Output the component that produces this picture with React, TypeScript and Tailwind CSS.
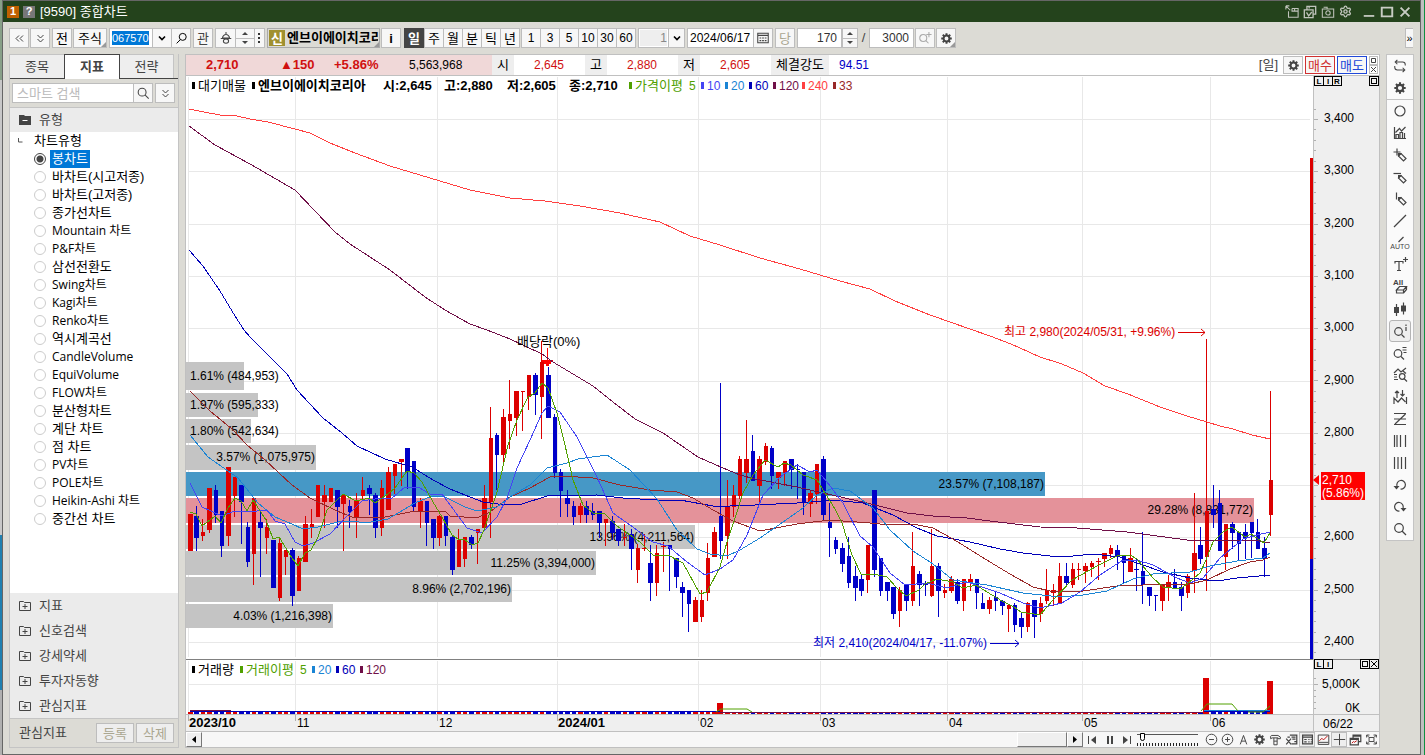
import { useState, type ReactNode } from 'react';
import clsx from 'clsx';
import { Settings } from 'lucide-react';

const RED = '#dc0000';
const BLUE = '#0000c8';

// [high, bodyTop, bodyBottom, low, up]
const CANDLES: [number, number, number, number, number][] = [
  [514, 514, 551, 551, 1], [506, 516, 538, 551, 0], [519, 532, 536, 541, 1], [488, 488, 530, 533, 1],
  [485, 490, 515, 523, 0], [511, 511, 546, 557, 0], [467, 467, 536, 546, 1], [477, 477, 496, 517, 1],
  [485, 485, 502, 544, 0], [522, 527, 562, 567, 0], [498, 498, 554, 585, 1], [512, 522, 528, 577, 0],
  [519, 527, 538, 554, 1], [540, 540, 588, 588, 0], [537, 543, 598, 601, 1], [550, 550, 557, 575, 1],
  [548, 550, 596, 606, 0], [556, 558, 591, 591, 1], [516, 524, 562, 562, 1], [509, 524, 528, 538, 1],
  [485, 485, 517, 517, 1], [485, 495, 502, 528, 1], [488, 488, 502, 502, 1], [490, 490, 507, 528, 0],
  [494, 495, 504, 551, 1], [500, 506, 512, 528, 0], [493, 501, 518, 538, 1], [477, 490, 496, 500, 1],
  [485, 488, 494, 515, 0], [493, 495, 528, 538, 0], [480, 488, 528, 536, 1], [467, 472, 510, 510, 1],
  [464, 464, 476, 494, 1], [459, 459, 462, 486, 1], [448, 448, 472, 489, 0], [461, 461, 507, 512, 0],
  [498, 501, 511, 528, 1], [501, 501, 523, 546, 0], [519, 519, 538, 549, 0], [515, 516, 538, 546, 1],
  [516, 516, 536, 546, 0], [536, 537, 570, 575, 0], [529, 540, 567, 567, 1], [537, 537, 559, 567, 1],
  [535, 537, 545, 549, 0], [529, 529, 533, 564, 1], [485, 498, 528, 528, 1], [407, 438, 502, 538, 1],
  [433, 435, 455, 490, 0], [409, 417, 455, 466, 1], [380, 414, 421, 449, 1], [391, 391, 418, 436, 1],
  [391, 391, 392, 431, 1], [375, 375, 397, 410, 1], [373, 375, 395, 415, 0], [341, 362, 397, 439, 1],
  [367, 375, 418, 418, 0], [414, 417, 473, 478, 0], [469, 472, 491, 517, 0], [490, 498, 504, 517, 0],
  [501, 506, 517, 525, 0], [503, 506, 515, 523, 1], [501, 506, 515, 523, 0], [503, 511, 515, 520, 0],
  [511, 511, 523, 538, 0], [519, 519, 523, 546, 1], [516, 521, 533, 540, 0], [529, 529, 541, 546, 0],
  [524, 537, 538, 546, 1], [529, 534, 549, 570, 0], [544, 548, 570, 583, 1], [534, 548, 549, 551, 1],
  [545, 563, 583, 601, 0], [545, 553, 583, 596, 1], [542, 546, 547, 572, 1], [545, 545, 549, 591, 0],
  [558, 558, 577, 588, 0], [582, 587, 593, 617, 0], [590, 590, 604, 632, 0], [597, 600, 622, 622, 1],
  [590, 600, 617, 622, 1], [543, 558, 593, 601, 1], [527, 532, 557, 557, 1], [383, 516, 541, 559, 0],
  [480, 507, 536, 559, 1], [485, 495, 507, 517, 1], [456, 459, 496, 499, 1], [420, 459, 473, 483, 1],
  [435, 451, 481, 481, 0], [456, 459, 486, 502, 1], [443, 446, 462, 465, 1], [446, 448, 476, 489, 0],
  [472, 472, 478, 489, 1], [461, 461, 473, 486, 1], [459, 459, 470, 489, 0], [464, 469, 470, 499, 0],
  [472, 472, 503, 515, 0], [490, 493, 504, 517, 1], [464, 464, 494, 504, 1], [456, 459, 515, 520, 0],
  [503, 522, 528, 557, 0], [537, 540, 549, 554, 0], [543, 548, 564, 572, 0], [537, 556, 583, 588, 0],
  [566, 576, 588, 601, 0], [574, 579, 591, 596, 0], [545, 545, 580, 593, 1], [490, 490, 570, 577, 0],
  [558, 558, 591, 596, 0], [582, 582, 591, 601, 0], [587, 587, 614, 619, 0], [587, 590, 611, 627, 1],
  [584, 584, 601, 611, 0], [532, 566, 601, 606, 1], [571, 574, 585, 606, 0], [581, 584, 585, 596, 0],
  [529, 566, 596, 597, 1], [563, 566, 591, 617, 0], [584, 590, 593, 598, 1], [576, 579, 591, 593, 1],
  [579, 582, 601, 604, 0], [579, 579, 601, 611, 1], [574, 579, 583, 591, 1], [579, 579, 593, 609, 0],
  [593, 603, 609, 609, 0], [597, 600, 609, 614, 1], [591, 597, 601, 611, 0], [600, 601, 606, 615, 0],
  [605, 605, 609, 632, 1], [603, 605, 625, 632, 0], [613, 618, 627, 638, 0], [602, 603, 627, 632, 1],
  [600, 600, 617, 638, 0], [597, 603, 614, 622, 1], [569, 590, 601, 604, 1], [584, 590, 593, 606, 1],
  [563, 576, 604, 604, 1], [563, 576, 583, 585, 0], [563, 569, 585, 588, 1], [563, 569, 570, 580, 1],
  [563, 566, 571, 583, 1], [561, 563, 567, 577, 1], [558, 561, 562, 580, 1], [553, 553, 559, 567, 1],
  [545, 548, 554, 558, 1], [545, 550, 557, 570, 0], [556, 556, 563, 584, 0], [548, 558, 572, 572, 1],
  [558, 569, 570, 591, 0], [532, 571, 585, 604, 0], [587, 587, 596, 606, 0], [595, 595, 596, 611, 0],
  [584, 585, 601, 611, 1], [575, 582, 587, 601, 1], [569, 582, 588, 588, 0], [582, 587, 596, 611, 0],
  [574, 576, 593, 598, 1], [493, 553, 571, 593, 1], [527, 545, 559, 564, 0], [339, 511, 557, 591, 1],
  [485, 509, 515, 528, 0], [490, 503, 551, 551, 0], [524, 524, 557, 570, 1], [522, 524, 533, 549, 0],
  [532, 532, 544, 561, 0], [524, 532, 538, 559, 0], [522, 522, 533, 558, 0], [519, 532, 549, 549, 0],
  [537, 548, 559, 577, 0], [391, 480, 515, 536, 1],
];

const AVERAGES = [
  {
    color: '#ff4040',
    points:
      '189,109 204,112 220,115 237,116 250,119 268,122 295,129 310,133 330,143 355,153 390,166 430,178 470,190 510,198 545,201 580,206 620,213 660,222 690,236 720,245 760,258 800,269 840,281 870,289 895,301 930,315 990,336 1011,344 1040,357 1062,364 1083,373 1105,386 1128,394 1160,407 1187,416 1207,422 1220,426 1233,429 1252,435 1270,439',
  },
  {
    color: '#701048',
    points:
      '189,126 215,145 250,164 295,190 335,232 350,244 390,270 425,297 445,310 470,324 487,330 510,339 542,354 553,362 593,386 613,402 635,419 663,433 698,457 723,468 740,475 755,479 797,487 823,493 867,503 907,513 933,516 967,518 990,521 1040,527 1077,528 1127,532 1150,535 1187,540 1207,540 1253,540 1270,543',
  },
  {
    color: '#0000b8',
    points:
      '189,250 203,266 220,291 235,316 244,330 250,337 268,355 287,374 297,390 323,418 342,433 357,446 385,459 412,467 433,480 450,489 465,495 483,502 505,505 522,504 547,496 597,495 623,498 657,500 680,500 713,506 730,506 755,505 797,503 833,500 863,503 893,515 917,528 937,536 970,542 1000,549 1023,553 1050,556 1073,556 1093,554 1120,557 1140,564 1163,572 1190,578 1207,580 1224,580 1237,578 1270,575',
  },
  {
    color: '#982828',
    points:
      '190,391 210,411 232,429 247,445 265,460 292,485 310,498 337,511 352,517 385,517 415,511 445,511 450,516 477,518 490,512 510,497 530,488 550,477 563,476 593,478 620,485 650,490 677,492 693,498 713,510 733,521 760,531 797,524 830,520 870,523 890,525 913,524 933,528 953,539 990,562 1010,574 1033,587 1050,591 1083,591 1117,586 1170,584 1190,584 1207,580 1230,569 1250,562 1263,560 1270,557',
  },
  {
    color: '#1a84d4',
    points:
      '190,435 208,457 238,478 258,503 275,517 292,524 303,529 318,527 338,522 352,521 365,523 388,519 415,503 432,496 445,497 465,507 477,511 497,507 513,495 530,485 547,468 567,463 578,459 607,455 630,470 657,499 677,530 697,549 710,554 727,556 740,550 760,538 783,522 803,508 817,495 833,488 850,491 873,508 890,530 913,551 933,564 953,580 987,585 1023,593 1060,597 1083,595 1107,591 1133,579 1153,574 1190,572 1210,566 1237,561 1263,558 1270,553',
  },
  {
    color: '#4444f4',
    points:
      '190,483 202,507 222,516 235,511 248,512 267,510 275,521 285,524 295,542 303,546 313,543 330,534 348,515 362,501 375,499 392,498 405,487 418,487 430,494 442,494 467,528 482,533 497,517 507,498 517,468 530,440 542,413 548,406 560,412 577,437 597,477 613,513 637,530 653,542 668,546 687,562 705,575 720,569 733,560 747,535 763,495 780,477 797,465 810,472 817,470 827,482 843,503 860,536 873,547 890,573 905,585 927,583 947,588 967,582 1000,593 1023,603 1040,608 1062,603 1080,592 1100,575 1123,560 1137,560 1153,565 1177,578 1190,583 1203,578 1220,558 1243,539 1257,535 1270,532',
  },
  {
    color: '#50a000',
    points:
      '190,512 196,514 202,526 215,516 221,523 228,508 235,498 241,501 247,511 253,500 266,520 273,539 279,537 292,558 298,566 305,553 311,550 318,537 327,510 343,494 356,501 369,498 375,503 388,494 395,488 407,471 414,473 422,482 433,502 442,517 452,535 458,539 464,539 472,545 478,543 484,530 497,492 508,445 517,420 528,397 535,393 542,383 548,388 557,413 565,445 573,480 583,505 593,513 605,514 617,526 640,542 653,555 668,555 683,563 700,594 707,592 720,567 727,542 737,512 743,493 753,475 765,460 778,467 784,463 791,465 803,475 817,480 825,493 835,509 842,523 852,555 861,574 874,574 887,577 897,588 906,596 919,590 925,584 937,579 953,582 963,588 976,585 987,592 1002,601 1014,607 1021,612 1040,615 1053,600 1072,580 1097,566 1117,556 1130,555 1137,559 1153,578 1163,587 1180,589 1187,584 1200,573 1206,560 1213,542 1223,532 1232,527 1245,537 1251,534 1264,543 1270,533',
  },
];

const PROFILE = [
  { y: 362, h: 28, end: 244, label: '1.61% (484,953)', color: '#c4c4c4' },
  { y: 393, h: 24, end: 258, label: '1.97% (595,333)', color: '#c4c4c4' },
  { y: 419, h: 24, end: 251, label: '1.80% (542,634)', color: '#c4c4c4' },
  { y: 445, h: 25, end: 316, label: '3.57% (1,075,975)', color: '#c4c4c4' },
  { y: 472, h: 24, end: 1045, label: '23.57% (7,108,187)', color: '#4698c6' },
  { y: 498, h: 25, end: 1254, label: '29.28% (8,831,772)', color: '#e4929a' },
  { y: 525, h: 24, end: 695, label: '13.96% (4,211,564)', color: '#c4c4c4' },
  { y: 551, h: 24, end: 596, label: '11.25% (3,394,000)', color: '#c4c4c4' },
  { y: 577, h: 25, end: 512, label: '8.96% (2,702,196)', color: '#c4c4c4' },
  { y: 604, h: 24, end: 333, label: '4.03% (1,216,398)', color: '#c4c4c4' },
];

const MONTHS = [
  { x: 188, label: '2023/10', bold: true },
  { x: 295, label: '11' },
  { x: 437, label: '12' },
  { x: 557, label: '2024/01', bold: true },
  { x: 698, label: '02' },
  { x: 820, label: '03' },
  { x: 947, label: '04' },
  { x: 1082, label: '05' },
  { x: 1210, label: '06' },
];

const PRICES = ['3,400', '3,300', '3,200', '3,100', '3,000', '2,900', '2,800', '2,700', '2,600', '2,500', '2,400'];
const priceY = (i: number) => Math.round(119 + i * 52.3);

const PRICE_LEGEND = [
  { x: 192, label: '대기매물', color: '#000', hangul: true },
  { x: 629, label: '가격이평', color: '#50a000', hangul: true },
  { x: 701, label: '10', color: '#4444f4' },
  { x: 725, label: '20', color: '#1a84d4' },
  { x: 749, label: '60', color: '#0000b8' },
  { x: 773, label: '120', color: '#701048' },
  { x: 802, label: '240', color: '#ff4040' },
  { x: 833, label: '33', color: '#982828' },
];

const VOLUME_LEGEND = [
  { x: 192, label: '거래량', color: '#000', hangul: true },
  { x: 240, label: '거래이평', color: '#50a000', hangul: true },
  { x: 312, label: '20', color: '#1a84d4' },
  { x: 336, label: '60', color: '#0000b8' },
  { x: 360, label: '120', color: '#701048' },
];

const CHART_TYPES = [
  '봉차트', '바차트(시고저종)', '바차트(고저종)', '종가선차트', 'Mountain 차트', 'P&F차트', '삼선전환도',
  'Swing차트', 'Kagi차트', 'Renko차트', '역시계곡선', 'CandleVolume', 'EquiVolume', 'FLOW차트', '분산형차트',
  '계단 차트', '점 차트', 'PV차트', 'POLE차트', 'Heikin-Ashi 차트', '중간선 차트',
];

function Icon({ children, size = 16, className }: { children: ReactNode; size?: number; className?: string }) {
  return (
    <svg
      width={size}
      height={size}
      viewBox="0 0 16 16"
      fill="none"
      stroke="currentColor"
      strokeWidth="1.2"
      className={clsx('shrink-0', className)}
      aria-hidden="true"
    >
      {children}
    </svg>
  );
}

const gearTeeth = 'M8 1.5v3M8 11.5v3M1.5 8h3M11.5 8h3M3.4 3.4l2 2M10.6 10.6l2 2M3.4 12.6l2-2M10.6 5.4l2-2';

function Gear({ size = 16, className }: { size?: number; className?: string }) {
  return (
    <Icon size={size} className={className}>
      <path d={gearTeeth} strokeWidth="2.4" />
      <circle cx="8" cy="8" r="3.6" strokeWidth="2.4" />
    </Icon>
  );
}

const pencil = (
  <>
    <path d="M6.5 9l2.5-2.500 5 5-2.500 2.500z" />
    <path d="M6 6h4L6 10z" fill="currentColor" stroke="none" />
  </>
);

const DRAW_TOOLS: { name: string; icon: ReactNode }[] = [
  { name: '원', icon: <circle cx="8" cy="8" r="5" /> },
  {
    name: '지표 추가',
    icon: <path d="M2.5 2v11.5H14M4 13V9.5h2.5V13M8 13V7.5h2.5V13M12.5 13V8M3.5 7.5l4-4 2 2.5 4-4" />,
  },
  { name: '십자선', icon: <><path d="M1.5 5h7M5 1.5v7" />{pencil}</> },
  { name: '수평선', icon: <><path d="M1.5 4.5H9" />{pencil}</> },
  { name: '수직선', icon: <><path d="M4.5 1.5v7" />{pencil}</> },
  { name: '추세선', icon: <path d="M2 14L14 2" /> },
  {
    name: '자동 추세선',
    icon: (
      <>
        <path d="M6.5 7L11.5 2" />
        <text x="8" y="14" fontSize="7" textAnchor="middle" fill="currentColor" stroke="none">AUTO</text>
      </>
    ),
  },
  {
    name: '텍스트',
    icon: <path d="M3 6.5v-2h8v2M7 4.500v9M5 13.5h4M13.5 0v5M11 2.500h5" />,
  },
  {
    name: '모두 지우기',
    icon: (
      <>
        <text x="1" y="6" fontSize="8" fontWeight="bold" fill="currentColor" stroke="none">All</text>
        <path d="M4.5 11l3-3.500h7l-3 3.500zM4.5 11v3H11.500V11M11.500 14l3-3.500v-3" />
      </>
    ),
  },
  {
    name: '봉',
    icon: (
      <>
        <path d="M4.5 3v12M11.5 1.500v12" />
        <path d="M2 6h5v6H2zM9 4.500h5v6H9z" fill="currentColor" stroke="none" />
      </>
    ),
  },
  { name: '정보 보기', icon: <><circle cx="6.5" cy="8.5" r="3.8" /><path d="M9.5 11.5l3 3M14 4v4M14 1.500V3" /></> },
  { name: '목록 보기', icon: <><circle cx="6" cy="8.5" r="3.8" /><path d="M9 11.5l3 3M10.500 2.500h4M10.500 5h4M11.500 7.500h3" /></> },
  {
    name: '지표 조회',
    icon: <path d="M2 6l4-4 3 3 5-4M2 7.500h3M2 10h3M2 12.500h4M13 9.500a2.800 2.800 0 1 1-5.600 0 2.800 2.800 0 0 1 5.600 0zM12 11.500l3 3M11 4l3 2.500" />,
  },
  {
    name: '신호',
    icon: <path d="M2 15V9l4 4 3.500-4 4 4M14.500 8v7M5 9V2M3 4l2-2 2 2M10.500 1v6M8.500 5l2 2 2-2" />,
  },
  { name: '갠', icon: <path d="M2 2.500h12M2 8h12M2 13.500h12M13.500 3L3 13" /> },
  { name: '시간대', icon: <path d="M2.500 2v12M5 2v12M8.500 2v12M13.500 2v12" /> },
  { name: '등간격', icon: <path d="M2.500 2v12M6 2v12M9.500 2v12M13.500 2v12" /> },
  {
    name: '되돌리기',
    icon: <><path d="M5 9a4.3 4.3 0 1 1 3.500 3" /><path d="M1.500 9h6l-3 3.500z" fill="currentColor" stroke="none" /></>,
  },
  {
    name: '다시 실행',
    icon: <><path d="M7.500 12A4.3 4.3 0 1 1 11 9" /><path d="M8.500 9h6l-3 3.500z" fill="currentColor" stroke="none" /></>,
  },
  { name: '돋보기', icon: <><circle cx="7" cy="7" r="4.3" /><path d="M10 10l4 4" /></> },
];

function ToolButton({ label, children, className }: { label: string; children: ReactNode; className?: string }) {
  return (
    <button
      type="button"
      aria-label={label}
      className={clsx(
        'flex h-5 shrink-0 items-center justify-center border border-[#bdbdbd] bg-[#f7f7f7] text-[13px] leading-none text-black',
        className,
      )}
    >
      {children}
    </button>
  );
}

function Chevrons({ down }: { down?: boolean }) {
  return (
    <svg width="9" height="9" viewBox="0 0 9 9" fill="none" stroke="#444" className={clsx(down && '-rotate-90')} aria-hidden="true">
      <path d="M4 1.5l-3 3 3 3M8 1.5l-3 3 3 3" />
    </svg>
  );
}

function Spinner({ label }: { label: string }) {
  return (
    <div className="flex h-5 w-4 shrink-0 flex-col border border-[#bdbdbd] bg-[#f7f7f7] text-[#444]">
      <button type="button" aria-label={`${label} 증가`} className="flex flex-1 items-center justify-center border-b border-[#bdbdbd]">
        <svg width="6" height="3" aria-hidden="true"><path d="M3 0l3 3H0z" fill="currentColor" /></svg>
      </button>
      <button type="button" aria-label={`${label} 감소`} className="flex flex-1 items-center justify-center">
        <svg width="6" height="3" aria-hidden="true"><path d="M0 0h6L3 3z" fill="currentColor" /></svg>
      </button>
    </div>
  );
}

function TitleBar() {
  return (
    <header className="flex h-[21px] items-center bg-[#24431c] pl-1 pr-2 text-white">
      <span className="flex h-3 w-3 items-center justify-center bg-[#c06000] text-[11px] font-bold">1</span>
      <button type="button" className="ml-1 flex h-3 w-3 items-center justify-center bg-[#777] text-[11px] font-bold">?</button>
      <h1 className="ml-[5px] flex-1 text-[13px]">[9590] 종합차트</h1>
      <div className="flex items-center gap-1 text-[#c0c4bc]">
        <button type="button" aria-label="분리">
          <Icon size={14}>
            <path d="M1 1l5 5M1 1h4M1 1v4M4 7v7h11V4H8M8 4v3h7M11 4v3" />
          </Icon>
        </button>
        <button type="button" aria-label="복사">
          <Icon size={14}>
            <path d="M1.5 5.5h10v9h-10zM4.5 5V1.5h10v9H12M7 4V1.5M4 8.5l2.5 4L10 8" strokeWidth="1.5" />
          </Icon>
        </button>
        <button type="button" aria-label="캡처">
          <Icon size={14}><path d="M1.5 4.5h13V14h-13zM3 2.5h4v2" /><circle cx="8" cy="9" r="2.5" /></Icon>
        </button>
        <button type="button" aria-label="설정">
          <Settings size={13} strokeWidth={2.5} />
        </button>
      </div>
      <div className="ml-2.5 flex items-center gap-1 text-[#c8ccc4]">
        <button type="button" aria-label="최소화">
          <Icon size={14}><path d="M2 12.5h12" strokeWidth="2" /></Icon>
        </button>
        <button type="button" aria-label="최대화">
          <Icon size={14}><path d="M2 3h12v10H2z" strokeWidth="2.2" /></Icon>
        </button>
        <button type="button" aria-label="닫기">
          <Icon size={14}><path d="M3 3l10 10M13 3L3 13" strokeWidth="2.2" /></Icon>
        </button>
      </div>
    </header>
  );
}

function Toolbar() {
  return (
    <div className="flex h-8 items-center overflow-hidden pl-1.5 pr-[7px]">
      <ToolButton label="이전" className="w-5"><Chevrons /></ToolButton>
      <ToolButton label="펼치기" className="ml-px w-5"><Chevrons down /></ToolButton>
      <ToolButton label="전체" className="ml-0.5 w-5">전</ToolButton>
      <ToolButton label="주식" className="relative ml-px w-[34px]">
        주식
        <svg className="absolute bottom-0 right-0" width="5" height="5" aria-hidden="true"><path d="M5 0v5H0z" fill="#999" /></svg>
      </ToolButton>
      <div className="ml-0.5 flex h-5 w-11 items-center border border-[#bdbdbd] bg-white px-0.5">
        <input aria-label="종목코드" defaultValue="067570" className="h-3.5 w-[37px] bg-[#0078d7] text-[11px] text-white outline-none" />
      </div>
      <ToolButton label="종목 목록" className="-ml-px w-5">
        <Icon size={12}><path d="M4 6l4 4 4-4" strokeWidth="2.2" /></Icon>
      </ToolButton>
      <ToolButton label="종목 찾기" className="-ml-px w-5">
        <Icon size={13}><circle cx="9.5" cy="6" r="4.3" /><path d="M6.5 9.5L2 14" /></Icon>
      </ToolButton>
      <ToolButton label="관심" className="ml-0.5 w-5 text-[#444]!">관</ToolButton>
      <ToolButton label="알림" className="ml-0.5 w-[21px] text-[#444]!">
        <Icon size={14}><path d="M8 1v3M4 8c0-2 2-4 4-4s4 2 4 4zM2 8.5h12M5 11.5a3 2.5 0 1 0 6 0 3 2.5 0 1 0-6 0" /></Icon>
      </ToolButton>
      <div className="-ml-px flex h-5 w-5 flex-col border border-[#bdbdbd] bg-[#f7f7f7]">
        <button type="button" aria-label="위 종목" className="flex flex-1 items-center justify-center border-b border-[#bdbdbd]">
          <svg width="6" height="3" aria-hidden="true"><path d="M3 0l3 3H0z" fill="#444" /></svg>
        </button>
        <button type="button" aria-label="아래 종목" className="flex flex-1 items-center justify-center">
          <svg width="6" height="3" aria-hidden="true"><path d="M0 0h6L3 3z" fill="#444" /></svg>
        </button>
      </div>
      <ToolButton label="더보기" className="-ml-px w-[11px]">
        <svg width="3" height="12" aria-hidden="true"><path d="M0 1h2v2H0zM0 5h2v2H0zM0 9h2v2H0z" fill="#333" /></svg>
      </ToolButton>
      <button type="button" className="relative ml-0.5 flex h-5 w-[113px] shrink-0 items-center border border-[#aaa] bg-[#dcdbd5] px-px text-[13px] font-bold leading-none">
        <span className="mr-0.5 flex h-4 w-4 shrink-0 items-center justify-center bg-[#a09030] text-[13px] text-white">신</span>
        <span className="min-w-0 flex-1 overflow-hidden whitespace-nowrap text-left leading-4">엔브이에이치코리아</span>
        <svg className="absolute bottom-0 right-0" width="5" height="5" aria-hidden="true"><path d="M5 0v5H0z" fill="#999" /></svg>
      </button>
      <ToolButton label="정보" className="ml-px w-5"><b>i</b></ToolButton>
      <div className="ml-[3px] flex">
        {['일', '주', '월', '분', '틱', '년'].map((unit) => (
          <ToolButton
            key={unit}
            label={unit}
            className={unit === '일' ? 'w-5 border-[#444]! bg-[#444]! font-bold text-white!' : '-mr-px w-5'}
          >
            {unit}
          </ToolButton>
        ))}
      </div>
      <div className="ml-0.5 flex">
        {['1', '3', '5', '10', '30', '60'].map((n) => (
          <ToolButton key={n} label={`${n}분`} className="-mr-px w-5 text-[12px]!">{n}</ToolButton>
        ))}
      </div>
      <div className="ml-[3px] flex h-5 w-[31px] border border-[#bdbdbd] bg-white p-px">
        <input aria-label="간격" defaultValue="1" className="h-full w-full bg-[#eee] text-right text-[12px] text-[#888] outline-none" />
      </div>
      <ToolButton label="간격 목록" className="-ml-px w-[17px]">
        <Icon size={12}><path d="M4 6l4 4 4-4" strokeWidth="2.2" /></Icon>
      </ToolButton>
      <input aria-label="조회일" defaultValue="2024/06/17" className="ml-0.5 h-5 w-[67px] border border-[#bdbdbd] bg-white pl-0.5 text-[12px] outline-none" />
      <ToolButton label="달력" className="-ml-px w-5 text-[#444]!">
        <Icon size={14}><path d="M2 2.5h12v11H2zM2 5h12" /><path d="M4 8h8M4 11h8" strokeDasharray="2 1" /></Icon>
      </ToolButton>
      <ToolButton label="당일" className="ml-0.5 w-5 text-[#aaa690]!">당</ToolButton>
      <input aria-label="표시 개수" defaultValue="170" className="ml-0.5 h-5 w-[45px] border border-[#bdbdbd] bg-white pr-1 text-right text-[12px] text-[#333] outline-none" />
      <Spinner label="표시 개수" />
      <span className="w-[11px] text-center text-[13px] text-[#444]">/</span>
      <input aria-label="전체 개수" defaultValue="3000" className="h-5 w-[45px] border border-[#bdbdbd] bg-white pr-1 text-right text-[12px] text-[#333] outline-none" />
      <ToolButton label="확대" className="ml-px w-5 text-[#aaa]!">
        <Icon size={14}><circle cx="6" cy="8" r="4" /><path d="M9 11l3 3M12.5 1v6M9.5 4h6" /></Icon>
      </ToolButton>
      <ToolButton label="환경설정" className="relative ml-px w-5 text-[#444]!">
        <Gear size={13} />
        <svg className="absolute bottom-0 right-0" width="5" height="5" aria-hidden="true"><path d="M5 0v5H0z" fill="#999" /></svg>
      </ToolButton>
      <ToolButton label="도구 더보기" className="ml-auto w-2 border-r-0 text-[11px]!">»</ToolButton>
    </div>
  );
}

function FolderIcon({ open }: { open?: boolean }) {
  return (
    <svg width="12" height="12" viewBox="0 0 12 12" className="shrink-0" aria-hidden="true">
      {open ? (
        <>
          <path d="M0 1h5l1 1h6v9H0z" fill="#444" />
          <path d="M3.5 6.5h5" stroke="#fff" />
        </>
      ) : (
        <path d="M0.500 1.500h4l1 1h6v8H.5zM3.500 6.500h5M6 4v5" fill="none" stroke="#444" />
      )}
    </svg>
  );
}

function Sidebar() {
  const [type, setType] = useState('봉차트');

  return (
    <aside className="flex w-[170px] shrink-0 flex-col border-x border-b border-[#c4c4c4] bg-[#dcdbd5] text-[13px] text-[#444]">
      <div className="flex h-[25px] border-b border-[#444]">
        <button type="button" className="w-[54px] border-t border-[#c4c4c4] bg-[#eee]">종목</button>
        <button type="button" className="-mb-px w-14 border-x border-t border-[#444] bg-white font-bold">지표</button>
        <button type="button" className="w-[54px] border-r border-t border-[#c4c4c4] bg-[#eee]">전략</button>
      </div>
      <div className="flex h-[28px] items-center px-0.5">
        <input aria-label="검색" placeholder="스마트 검색" className="h-5 w-[122px] border border-[#bdbdbd] bg-white pl-1 text-[13px] outline-none placeholder:text-[#bbb]" />
        <ToolButton label="찾기" className="-ml-px w-5 text-[#444]!">
          <Icon size={14}><circle cx="7" cy="7" r="4.5" /><path d="M10.5 10.5l4 4" /></Icon>
        </ToolButton>
        <ToolButton label="옵션" className="ml-0.5 w-5"><Chevrons down /></ToolButton>
      </div>
      <button type="button" className="flex h-[25px] items-center gap-2 border-t border-[#c4c4c4] bg-[#ebebeb] pl-[9px]">
        <FolderIcon open />
        유형
      </button>
      <div className="flex-1 bg-white text-black">
        <div className="flex h-[18px] items-center">
          <svg width="24" height="18" aria-hidden="true"><path d="M8.5 6v4h4" fill="none" stroke="#555" /></svg>
          차트유형
        </div>
        {CHART_TYPES.map((name) => (
          <label key={name} className="flex h-[18px] items-center pl-6">
            <input
              type="radio"
              name="chart-type"
              checked={type === name}
              onChange={() => setType(name)}
              className="h-3 w-3 shrink-0 appearance-none rounded-full border border-[#ccc] bg-white checked:border-[#444] checked:bg-[radial-gradient(circle,#444_3px,#fff_4px)]"
            />
            <span
              className={clsx(
                'ml-1 px-0.5 leading-[18px]',
                type === name && 'bg-[#0078d7] text-white',
                /[A-Z]/.test(name) && "font-['Open_Sans','Noto_Sans_CJK_KR',sans-serif] text-[12px]",
              )}
            >
              {name}
            </span>
          </label>
        ))}
      </div>
      {['지표', '신호검색', '강세약세', '투자자동향', '관심지표'].map((name) => (
        <button key={name} type="button" className="flex h-[25px] items-center gap-2 bg-[#ebebeb] pl-[9px]">
          <FolderIcon />
          {name}
        </button>
      ))}
      <div className="flex h-[29px] items-center border-t border-[#c4c4c4] pl-[9px]">
        <span className="flex-1">관심지표</span>
        <button type="button" disabled className="h-5 w-[38px] border border-[#bdbdbd] bg-[#eee] leading-none text-[#aaa690]">등록</button>
        <button type="button" disabled className="ml-0.5 mr-1 h-5 w-[38px] border border-[#bdbdbd] bg-[#eee] leading-none text-[#aaa690]">삭제</button>
      </div>
    </aside>
  );
}

function QuoteBar() {
  return (
    <div className="flex h-[21px] items-center whitespace-nowrap border-b border-[#c0c0c0] bg-white text-[12px]">
      <div className="flex h-full w-[306px] shrink-0 items-center bg-[#f0d8d8] text-[#d01010]">
        <b className="ml-5 w-[74px] text-[13px]">2,710</b>
        <b className="w-[54px] text-[13px]">▲150</b>
        <b className="w-[75px] text-[13px]">+5.86%</b>
        <span className="text-black">5,563,968</span>
      </div>
      {[
        ['시', '2,645'],
        ['고', '2,880'],
        ['저', '2,605'],
      ].map(([name, price]) => (
        <div key={name} className="flex h-full w-[93px] shrink-0">
          <span className="flex w-[22px] items-center justify-center bg-[#eee] text-[13px]">{name}</span>
          <span className="flex items-center pl-5 text-[#d01010]">{price}</span>
        </div>
      ))}
      <span className="flex h-full w-[58px] items-center justify-center bg-[#eee] text-[13px]">체결강도</span>
      <span className="flex-1 pl-2.5 text-[#0000c8]">94.51</span>
      <span className="mr-[5px] text-[13px] text-[#444]">[일]</span>
      <ToolButton label="차트 설정" className="h-[18px]! w-5 text-[#444]!"><Gear size={13} /></ToolButton>
      <button type="button" className="ml-0.5 h-[18px] w-[30px] border border-[#d03030] bg-[#f7f7f7] text-[13px] leading-none text-[#d03030]">매수</button>
      <button type="button" className="ml-0.5 h-[18px] w-[30px] border border-[#2048d8] bg-[#f7f7f7] text-[13px] leading-none text-[#2048d8]">매도</button>
      <div className="ml-0.5 mr-px flex w-[9px] flex-col">
        <button type="button" aria-label="창 확대" className="h-[9px] border border-[#bdbdbd]">
          <svg width="7" height="7" className="block" aria-hidden="true"><path d="M1.5 1.5h4v4h-4z" fill="none" stroke="#444" /></svg>
        </button>
        <button type="button" aria-label="창 닫기" className="h-[9px] border border-[#bdbdbd]">
          <svg width="7" height="7" className="block" aria-hidden="true"><path d="M1 1l5 5M6 1L1 6" fill="none" stroke="#444" /></svg>
        </button>
      </div>
    </div>
  );
}

function Legend({ items, y }: { items: { x: number; label: string; color: string; hangul?: boolean }[]; y: number }) {
  return (
    <>
      {items.map((item) => (
        <g key={item.x} fill={item.color}>
          <rect x={item.x} y={y - 8} width="3" height="7" />
          <text x={item.x + 6} y={y} fontSize={item.hangul ? 13 : 12}>{item.label}</text>
        </g>
      ))}
    </>
  );
}

function BoxLetters({ x, y, letters }: { x: number; y: number; letters: string[] }) {
  return (
    <>
      {letters.map((letter, i) => (
        <g key={letter}>
          <rect x={x + i * 9 + 0.5} y={y + 0.5} width="9" height="9" fill="#efefef" stroke="#000" />
          <text x={x + i * 9 + 5} y={y + 8} fontSize="8" fontWeight="bold" textAnchor="middle">{letter}</text>
        </g>
      ))}
    </>
  );
}

function Chart() {
  return (
    <svg viewBox="186 76 1193 656" className="block w-full bg-white" role="img" aria-label="엔브이에이치코리아 일봉 차트">
      <g stroke="#e8e8e8" shapeRendering="crispEdges">
        {PRICES.map((price, i) => (
          <path key={price} d={`M188 ${priceY(i) + 0.5}H1310`} />
        ))}
        {MONTHS.map((month) => (
          <path key={month.label} d={`M${month.x + 0.5} 77V657M${month.x + 0.5} 661V714`} />
        ))}
        <path d="M188 684.5H1313" />
      </g>

      <g shapeRendering="crispEdges">
        {PROFILE.map((bar) => (
          <rect key={bar.label} x="186" y={bar.y} width={bar.end - 186} height={bar.h} fill={bar.color} />
        ))}
      </g>
      <g fontSize="12">
        {PROFILE.map((bar) => (
          <text
            key={bar.label}
            x={bar.end < 280 ? 190 : bar.end - 1}
            y={bar.y + (bar.h > 27 ? 18 : 16)}
            textAnchor={bar.end < 280 ? 'start' : 'end'}
          >
            {bar.label}
          </text>
        ))}
      </g>

      <g shapeRendering="crispEdges">
        {CANDLES.map(([high, top, bottom, low, up], i) => {
          const center = 190 + i * 6.395;
          const x = Math.floor(center);
          const left = Math.round(center - 2);
          const width = Math.round(center + 2.5) - left;
          return (
            <g key={i} fill={up ? RED : BLUE}>
              <rect x={x} y={high} width="1" height={Math.max(low - high, 1)} />
              <rect x={left} y={top} width={width} height={Math.max(bottom - top, 1)} />
              <rect x={left} y={712} width={width} height="2" />
            </g>
          );
        })}
        <rect x="547" y="348" width="1" height="12" fill="red" />
        <path d="M542 360h11v2h-2v2h-2v2h-3v-2h-2v-2h-2z" fill="red" />
      </g>
      <g fill="none" strokeWidth="1" shapeRendering="crispEdges">
        {AVERAGES.map((line) => (
          <polyline key={line.color} points={line.points} stroke={line.color} />
        ))}
      </g>

      <Legend items={PRICE_LEGEND} y={90} />
      <text x="689" y="90" fontSize="12" fill="#50a000">5</text>
      <rect x="252" y="82" width="3" height="7" />
      <g fontSize="13" fontWeight="bold">
        <text x="258" y="90">엔브이에이치코리아</text>
        <text x="383" y="90">시:2,645</text>
        <text x="444" y="90">고:2,880</text>
        <text x="507" y="90">저:2,605</text>
        <text x="569" y="90">종:2,710</text>
      </g>

      <text x="517" y="346" fontSize="13">배당락(0%)</text>
      <g fill={RED}>
        <text x="1004" y="336" fontSize="12">최고 2,980(2024/05/31, +9.96%)</text>
        <path d="M1178 332.5h27M1201 329l4 3.5-4 3.5" fill="none" stroke={RED} />
      </g>
      <g fill={BLUE}>
        <text x="813" y="647" fontSize="12">최저 2,410(2024/04/17, -11.07%)</text>
        <path d="M990 643.5h29M1015 640l4 3.5-4 3.5" fill="none" stroke={BLUE} />
      </g>

      <g shapeRendering="crispEdges">
        <rect x="186" y="659" width="1193" height="1" fill="#808080" />
        <rect x="1203" y="678" width="6" height="36" fill={RED} />
        <rect x="1267" y="681" width="6" height="33" fill={RED} />
        <rect x="717" y="703" width="6" height="11" fill={RED} />
        <rect x="190" y="711" width="530" height="1" fill="#0000b8" />
        <rect x="190" y="710" width="41" height="1" fill="#701048" />
        <rect x="720" y="712" width="483" height="1" fill="#701048" />
        <rect x="1204" y="710" width="66" height="1" fill="#1a84d4" />
        <rect x="1204" y="711" width="66" height="1" fill="#0000b8" />
      </g>
      <path d="M716 712l5-3h26l5 3M1201 711l6-7h25l6 7M1248 712h15l7-6" fill="none" stroke="#50a000" />
      <Legend items={VOLUME_LEGEND} y={674} />
      <text x="300" y="674" fontSize="12" fill="#50a000">5</text>

      <g shapeRendering="crispEdges">
        <rect x="1313" y="76" width="66" height="583" fill="#efefef" />
        <rect x="1313" y="660" width="66" height="72" fill="#efefef" />
        <rect x="186" y="715" width="1127" height="17" fill="#efefef" />
        <rect x="1313" y="76" width="1" height="656" fill="#c0c0c0" />
        <rect x="186" y="714" width="1193" height="1" fill="#c0c0c0" />
        <rect x="186" y="731" width="1193" height="1" fill="#c0c0c0" />
        <rect x="1310" y="158" width="3" height="401" fill={RED} />
        <rect x="1310" y="559" width="3" height="100" fill={BLUE} />
        {Array.from({ length: 53 }, (_, i) => (
          <rect key={i} x="1314" y={Math.round(108.5 + i * 10.46)} width={i % 5 === 1 ? 4 : 2} height="1" fill="#b0b0b0" />
        ))}
        {[678, 684, 690, 696, 702, 708].map((y) => (
          <rect key={y} x="1314" y={y} width={y === 684 ? 4 : 2} height="1" fill="#b0b0b0" />
        ))}
        {MONTHS.map((month) => (
          <rect key={month.x} x={month.x} y="715" width="1" height="6" fill="#b0b0b0" />
        ))}
      </g>

      <g fontSize="12">
        {PRICES.map((price, i) =>
          price === '2,700' ? null : <text key={price} x="1324" y={priceY(i) + 3}>{price}</text>,
        )}
        <text x="1360" y="688" textAnchor="end">5,000K</text>
        <text x="1360" y="712" textAnchor="end">0K</text>
        <text x="1323" y="728">06/22</text>
        {MONTHS.map((month) => (
          <text
            key={month.label}
            x={month.bold ? month.x + 1 : month.x + 2}
            y="727"
            fontSize={month.bold ? 13 : 12}
            fontWeight={month.bold ? 'bold' : undefined}
          >
            {month.label}
          </text>
        ))}
        <path d="M1313 480l6-5v10z" fill="red" />
        <rect x="1321" y="472" width="44" height="28" fill="red" />
        <text x="1322" y="484" fill="#fff">2,710</text>
        <text x="1322" y="497" fill="#fff">(5.86%)</text>
      </g>

      <BoxLetters x={1314} y={76} letters={['L', 'I', 'R']} />
      <BoxLetters x={1314} y={659} letters={['L', 'I']} />
      <g fill="#efefef" stroke="#000" shapeRendering="crispEdges">
        <path d="M1369.5 76.5h9v9h-9zM1371.5 78.5h5v5h-5z" />
        <path d="M1360.5 659.5h9v9h-9zM1362.5 661.5h5v5h-5zM1369.5 659.5h9v9h-9z" />
        <path d="M1371 661l6 6M1377 661l-6 6" shapeRendering="auto" />
      </g>
    </svg>
  );
}

const FOOTER_TOOLS: { name: string; pressed?: boolean; icon: ReactNode }[] = [
  { name: '축소', icon: <><circle cx="8" cy="8" r="6.5" /><path d="M5 8h6" /></> },
  { name: '확대', icon: <><circle cx="8" cy="8" r="6.5" /><path d="M5 8h6M8 5v6" /></> },
  { name: '글자', icon: <path d="M4 14L8 3l4 11M5.5 10h5" /> },
  { name: '설정', icon: <><path d={gearTeeth} strokeWidth="2.4" /><circle cx="8" cy="8" r="3.6" strokeWidth="2.4" /></> },
  { name: '도구', icon: <path d="M3 3h8l3 2v2h-3V6H4L2 7V4zM6 6v8.5h4V6M6 10h4" /> },
  { name: '엑셀', icon: <path d="M6 2.5h8.5v8h-3M1.5 7l6 7M7.5 7l-6 7M8 13.5h6.5v-3M8 5h5M9 7.5h4M3 5h3" strokeWidth="1.5" /> },
  { name: '데이터 창', pressed: true, icon: <path d="M2 2.5h12v11H2zM2 5h12M4 8h3M4 11h3M9 8h1.5M9 11h1.5M12 8h1M12 11h1" strokeWidth="1.5" /> },
  { name: '차트 보기', icon: <><path d="M1.5 2.5h13V14h-13zM2 11.5h12" /><path d="M3 9.5l3-3 2 2 5-5" stroke="#c01010" /></> },
  { name: '십자 커서', pressed: true, icon: <path d="M8 1v14M1 8h14" /> },
  { name: '겹쳐 보기', icon: <><path d="M1.5 6.5h10v8h-10zM5 6V2.500h9.500v8H12M2 8h9M5 4h9" strokeWidth="1.5" /><path d="M3.5 12.5l2-2 1 1 3-2" stroke="#c01010" /></> },
  { name: '전체 화면', icon: <path d="M2 5.5v-3h3.500M10.500 2.500H14v3M14 10.500v3h-3.500M5.500 13.500H2v-3M5 5.500h6v5H5zM2 2.500l3 3M14 2.500l-3 3M14 13.500l-3-3M2 13.500l3-3" /> },
];

function ChartFooter() {
  const scrollButton = 'flex h-full w-4 shrink-0 items-center justify-center border border-b-[#777] border-r-[#777] border-l-white border-t-white bg-[#efefef]';

  return (
    <div className="flex h-[15px] items-center bg-[#f7f7f7] text-[#444]">
      <button type="button" aria-label="왼쪽으로" className={scrollButton}>
        <svg width="4" height="7" aria-hidden="true"><path d="M4 0v7L0 3.5z" fill="#000" /></svg>
      </button>
      <div className="flex h-full flex-1 justify-end bg-[#f7f7f7]">
        <div className="h-full w-[50px] border border-b-[#777] border-r-[#777] border-l-white border-t-white bg-[#efefef]" />
      </div>
      <button type="button" aria-label="오른쪽으로" className={scrollButton}>
        <svg width="4" height="7" aria-hidden="true"><path d="M0 0v7l4-3.500z" fill="#000" /></svg>
      </button>
      <div className="flex w-[54px] items-center justify-around">
        <button type="button" aria-label="처음">
          <svg width="9" height="8" className="block" aria-hidden="true"><path d="M0 0h1v8H0zM8 0v8L3 4z" fill="#444" /></svg>
        </button>
        <button type="button" aria-label="일시 정지">
          <svg width="8" height="8" className="block" aria-hidden="true"><path d="M1 0h2v8H1zM5 0h2v8H5z" fill="#444" /></svg>
        </button>
        <button type="button" aria-label="다음">
          <svg width="9" height="8" className="block" aria-hidden="true"><path d="M0 0l5 4-5 4zM7 0h1v8H7z" fill="#444" /></svg>
        </button>
      </div>
      <div className="flex h-full w-[61px] flex-col justify-between">
        <input
          type="range"
          aria-label="배율"
          min={0}
          max={100}
          defaultValue={5}
          className="h-[9px] w-full appearance-none bg-[linear-gradient(#555,#555)] bg-[length:100%_1px] bg-[position:0_2px] bg-no-repeat outline-none [&::-webkit-slider-thumb]:h-2 [&::-webkit-slider-thumb]:w-[5px] [&::-webkit-slider-thumb]:appearance-none [&::-webkit-slider-thumb]:rounded-b-[3px] [&::-webkit-slider-thumb]:border [&::-webkit-slider-thumb]:border-black [&::-webkit-slider-thumb]:bg-white"
        />
        <div className="mb-px h-[3px] bg-[repeating-linear-gradient(90deg,#222_0_1px,transparent_1px_3px)]" />
      </div>
      <div className="ml-[5px] flex h-full">
        {FOOTER_TOOLS.map((tool) => (
          <button
            key={tool.name}
            type="button"
            aria-label={tool.name}
            className={clsx('flex h-full w-4 items-center justify-center', tool.pressed && 'border border-[#bdbdbd] bg-[#eee]')}
          >
            <Icon size={13}>{tool.icon}</Icon>
          </button>
        ))}
      </div>
    </div>
  );
}

function DrawToolbar() {
  return (
    <nav className="w-7 shrink-0 self-start border border-[#c4c4c4] bg-[#fafafa] text-[#444]">
      <div className="border-b border-[#c4c4c4]">
        <button type="button" aria-label="초기화" className="flex h-[22px] w-full items-center justify-center">
          <Icon size={14}><path d="M5 1L2.5 3.5 5 6M3 3.5h8q3 0 3 3v1M11 10l2.5 2.5L11 15M13 12.5H5q-3 0-3-3V8" /></Icon>
        </button>
        <button type="button" aria-label="도구 설정" className="flex h-[22px] w-full items-center justify-center">
          <Gear size={14} />
        </button>
      </div>
      {DRAW_TOOLS.map((tool) => (
        <button
          key={tool.name}
          type="button"
          aria-label={tool.name}
          className={clsx(
            'mx-auto flex h-[22px] w-[22px] items-center justify-center',
            tool.name === '정보 보기' && 'rounded-[3px] border border-[#b4b4b4] bg-[#eee]',
          )}
        >
          <Icon className="overflow-visible">{tool.icon}</Icon>
        </button>
      ))}
    </nav>
  );
}

export default function App() {
  return (
    <div className="flex min-h-screen bg-[#b8b8b4] font-['Liberation_Sans','Noto_Sans_CJK_KR',sans-serif]">
      <div className="w-0.5 shrink-0 bg-[linear-gradient(#88a088_0_80px,#c8c8c8_80px_535px,#2080b0_535px_690px,#b0b0b0_690px)]" />
      <div className="flex min-w-0 flex-1 flex-col border border-[#666] bg-[#dcdbd5]">
        <TitleBar />
        <Toolbar />
        <main className="flex flex-1 gap-1.5 pb-1.5 pl-1.5 pr-1.5">
          <Sidebar />
          <section className="min-w-0 flex-1 self-start border border-[#c0c0c0]">
            <QuoteBar />
            <Chart />
            <ChartFooter />
          </section>
          <DrawToolbar />
        </main>
      </div>
      <div className="w-[3px] shrink-0 bg-[#c0c0c0]" />
      <div className="w-px shrink-0 bg-[#109040]" />
    </div>
  );
}
